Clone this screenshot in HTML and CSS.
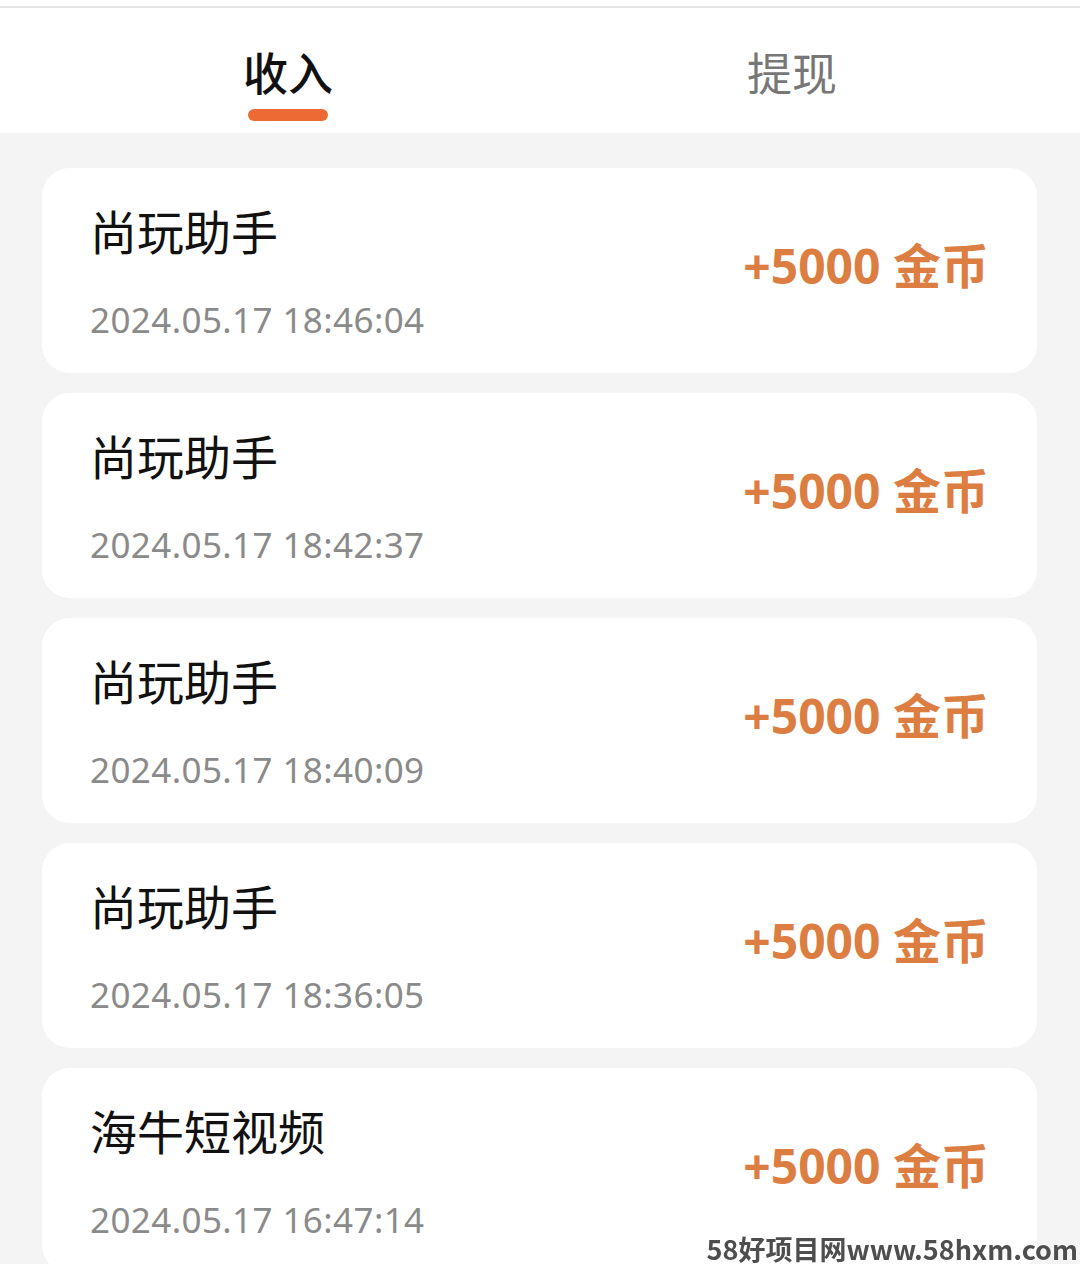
FILE: index.html
```html
<!DOCTYPE html>
<html lang="zh-CN">
<head>
    <meta charset="UTF-8" />
    <meta name="viewport" content="width=device-width, initial-scale=1.0" />
    <title>金币明细</title>
    <link rel="stylesheet" href="styles.css">
</head>
<body>

<header class="tabs">
    <div class="tab active">
        <span class="tab-label">收入</span>
        <span class="tab-line"></span>
    </div>
    <div class="tab">
        <span class="tab-label">提现</span>
    </div>
</header>

<main class="list">
    <div class="item">
        <div class="info">
            <p class="name">尚玩助手</p>
            <p class="time">2024.05.17 18:46:04</p>
        </div>
        <p class="amount">+5000 金币</p>
    </div>
    <div class="item">
        <div class="info">
            <p class="name">尚玩助手</p>
            <p class="time">2024.05.17 18:42:37</p>
        </div>
        <p class="amount">+5000 金币</p>
    </div>
    <div class="item">
        <div class="info">
            <p class="name">尚玩助手</p>
            <p class="time">2024.05.17 18:40:09</p>
        </div>
        <p class="amount">+5000 金币</p>
    </div>
    <div class="item">
        <div class="info">
            <p class="name">尚玩助手</p>
            <p class="time">2024.05.17 18:36:05</p>
        </div>
        <p class="amount">+5000 金币</p>
    </div>
    <div class="item">
        <div class="info">
            <p class="name">海牛短视频</p>
            <p class="time">2024.05.17 16:47:14</p>
        </div>
        <p class="amount">+5000 金币</p>
    </div>
</main>

<div class="watermark">58好项目网www.58hxm.com</div>

</body>
</html>
```

FILE: styles.css
```css
* {
    margin: 0;
    padding: 0;
    box-sizing: border-box;
}
body {
    background-color: #f4f4f4;
    font-family: "Noto Sans", "Noto Sans CJK SC", sans-serif;
    height: 1264px;
    overflow: hidden;
}
.tabs {
    height: 133px;
    background-color: #fff;
    border-top: 6px solid #fff;
    box-shadow: inset 0 7px 0 -5px #e6e6e6;
    display: flex;
    padding: 0 36px;
}
.tab {
    flex: 1;
    display: flex;
    flex-direction: column;
    align-items: center;
    padding-top: 38px;
}
.tab-label {
    font-family: "Noto Sans CJK SC", sans-serif;
    font-size: 45px;
    line-height: 56px;
    color: #777;
}
.tab.active .tab-label {
    color: #111;
    font-weight: 500;
}
.tab-line {
    width: 80px;
    height: 12px;
    margin-top: 9px;
    border-radius: 6px;
    background-color: #ee6a35;
}
.list {
    padding: 35px 43px 0 42px;
    display: flex;
    flex-direction: column;
    gap: 20px;
}
.item {
    height: 205px;
    background-color: #fff;
    border-radius: 28px;
    padding: 0 48px;
    display: flex;
    justify-content: space-between;
    align-items: center;
}
.info {
    display: flex;
    flex-direction: column;
    padding-top: 2px;
}
.name {
    font-family: "Noto Sans CJK SC", sans-serif;
    font-size: 47px;
    line-height: 56px;
    color: #111;
}
.time {
    margin-top: 40px;
    font-size: 35px;
    line-height: 44px;
    letter-spacing: 0.4px;
    color: #8a8a8a;
}
.amount {
    font-size: 48px;
    font-weight: bold;
    color: #dc7e42;
    padding-bottom: 16px;
}
.watermark {
    position: fixed;
    right: 2px;
    bottom: 0;
    font-family: "Noto Sans CJK SC", sans-serif;
    font-size: 27px;
    line-height: 30px;
    font-weight: bold;
    color: #4e4e4e;
    text-shadow: 0 0 2px #fff, 0 0 2px #fff;
}
```
